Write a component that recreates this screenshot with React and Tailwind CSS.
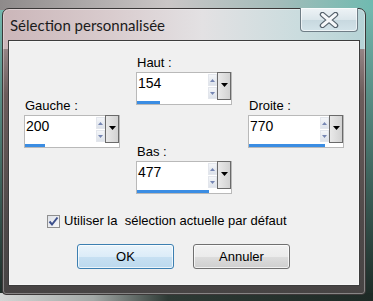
import React from "react";

const fields = {
  haut: { label: "Haut :", value: "154", bar: "w-[23px]" },
  gauche: { label: "Gauche :", value: "200", bar: "w-[20px]" },
  droite: { label: "Droite :", value: "770", bar: "w-[76px]" },
  bas: { label: "Bas :", value: "477", bar: "w-[72px]" },
};

const Arrow = ({ down, className }) => (
  <svg width="7" height="4" viewBox="0 0 7 4" className={className}>
    <path d={down ? "M0 0H7L3.5 4Z" : "M0 4H7L3.5 0Z"} fill="currentColor" />
  </svg>
);

// spin box with the little blue progress strip underneath
const SpinField = ({ label, value, bar }) => (
  <div className="flex flex-col">
    <div className="h-4 leading-4 text-[13px] text-black pl-px">{label}</div>
    <div className="mt-px w-[96px] h-[33px] border border-[#b9b9b9] bg-white flex flex-col">
      <div className="flex h-[27px]">
        <div className="flex-1 pl-px pt-[2px] text-[14px] leading-4 text-black">{value}</div>
        <div className="w-[9px] flex flex-col gap-px pt-px">
          <div className="h-[12px] bg-[linear-gradient(180deg,#f4f6f9,#dde2ea)] border border-[#e3e6ec] flex items-center justify-center">
            <svg width="5" height="3" viewBox="0 0 5 3">
              <path d="M0 3H5L2.5 0Z" fill="#7686b3" />
            </svg>
          </div>
          <div className="h-[12px] bg-[linear-gradient(180deg,#f4f6f9,#dde2ea)] border border-[#e3e6ec] flex items-center justify-center">
            <svg width="5" height="3" viewBox="0 0 5 3">
              <path d="M0 0H5L2.5 3Z" fill="#7686b3" />
            </svg>
          </div>
        </div>
        <div className="w-[14px] -mt-px border border-[#6a6a6a] bg-[linear-gradient(90deg,#e9e9e9,#d2d2d2)] flex justify-center pt-[10px]">
          <Arrow down className="text-black" />
        </div>
      </div>
      <div className="flex-1 pt-px">
        <div className={`h-[3px] bg-[#3b8de3] ${bar}`} />
      </div>
    </div>
  </div>
);

export default function App() {
  return (
    <div
      className="w-[373px] h-[301px] overflow-hidden pt-[8px] pl-[2px] [background:linear-gradient(90deg,#8e8a8a,#cac6c6_45%,#a3bcba_75%,#6fbab0)_top/100%_10px_no-repeat,linear-gradient(90deg,#d3d6d5,#a2a8a6_25%,#2e3a35_45%,#1e2a26)_bottom/100%_8px_no-repeat,linear-gradient(180deg,#76bdb3,#3e625b_60%,#1d2925)]"
      style={{ fontFamily: '"Liberation Sans", Arial, sans-serif' }}
    >
      <div className="w-[364px] h-[287px] rounded-t-[7px] rounded-b-[4px] border border-[#3b3838] shadow-[inset_0_0_0_1px_rgba(255,255,255,0.35)] [background:linear-gradient(90deg,#cbb6b9,#d9ccce_30%,#e3e1e3_55%,#cadcde_82%,#b6d3d6)_top/100%_40px_no-repeat,linear-gradient(180deg,#b9a8aa,#6c5c5b_30%,#4f4949_75%,#474444)] flex flex-col">
        {/* title bar */}
        <div className="h-[32px] flex justify-between">
          <div
            className="pl-[7px] pt-[6px] text-[15px] leading-5 text-[#1b1b1b]"
            style={{ fontFamily: "Lato, 'Noto Sans', sans-serif" }}
          >
            Sélection personnalisée
          </div>
          <div className="-mt-px mr-[7px] w-[58px] h-[24px] rounded-b-[4px] border border-[#6f7d86] border-t-0 bg-[linear-gradient(180deg,#eef3f6,#dbe6eb_50%,#c7d8df_51%,#d3e3e9)] shadow-[inset_0_0_0_1px_rgba(255,255,255,0.6)] flex items-center justify-center">
            <svg width="20" height="16" viewBox="0 0 20 16">
              <path d="M3.5 2.5L16.5 13.5M16.5 2.5L3.5 13.5" stroke="#56626c" strokeWidth="5.5" strokeLinecap="round" />
              <path d="M3.5 2.5L16.5 13.5M16.5 2.5L3.5 13.5" stroke="#f6f8fa" strokeWidth="3" strokeLinecap="round" />
            </svg>
          </div>
        </div>

        {/* client area */}
        <div className="ml-[6px] w-[350px] h-[244px] bg-[#f0f0f0] border border-[#f6f6f6] shadow-[0_0_0_1px_#3c3c3c]">
          <div className="pl-[14px] pt-[13px] flex gap-x-4">
            <div className="mt-[43px]">
              <SpinField {...fields.gauche} />
            </div>
            <div className="flex flex-col gap-[39px]">
              <SpinField {...fields.haut} />
              <SpinField {...fields.bas} />
            </div>
            <div className="mt-[43px]">
              <SpinField {...fields.droite} />
            </div>
          </div>

          <div className="mt-[19px] pl-[37px] h-4 flex items-center gap-[4px]">
            <div className="w-[13px] h-[13px] border border-[#8f8f8f] bg-[linear-gradient(135deg,#dfe2e8,#f7f7f9)] flex items-center justify-center">
              <svg width="11" height="11" viewBox="0 0 11 11">
                <path d="M1.5 5.5L4 8.5L9.5 1.5" stroke="#3c4f8c" strokeWidth="2" fill="none" />
              </svg>
            </div>
            <span className="text-[13px] leading-4 text-black whitespace-pre">
              Utiliser la  sélection actuelle par défaut
            </span>
          </div>

          <div className="mt-[15px] pl-[67px] flex gap-[19px]">
            <button className="w-[97px] h-[25px] rounded-[3px] border border-[#3c7fb1] bg-[linear-gradient(180deg,#eaf4fb,#dcecf8_50%,#c7e0f2_51%,#bcd9ee)] shadow-[inset_0_0_0_1px_rgba(255,255,255,0.7)] text-[13px] text-black">
              OK
            </button>
            <button className="w-[97px] h-[25px] rounded-[3px] border border-[#707070] bg-[linear-gradient(180deg,#f2f2f2,#ebebeb_50%,#dddddd_51%,#cfcfcf)] shadow-[inset_0_0_0_1px_rgba(255,255,255,0.7)] text-[13px] text-black">
              Annuler
            </button>
          </div>
        </div>
      </div>
    </div>
  );
}
